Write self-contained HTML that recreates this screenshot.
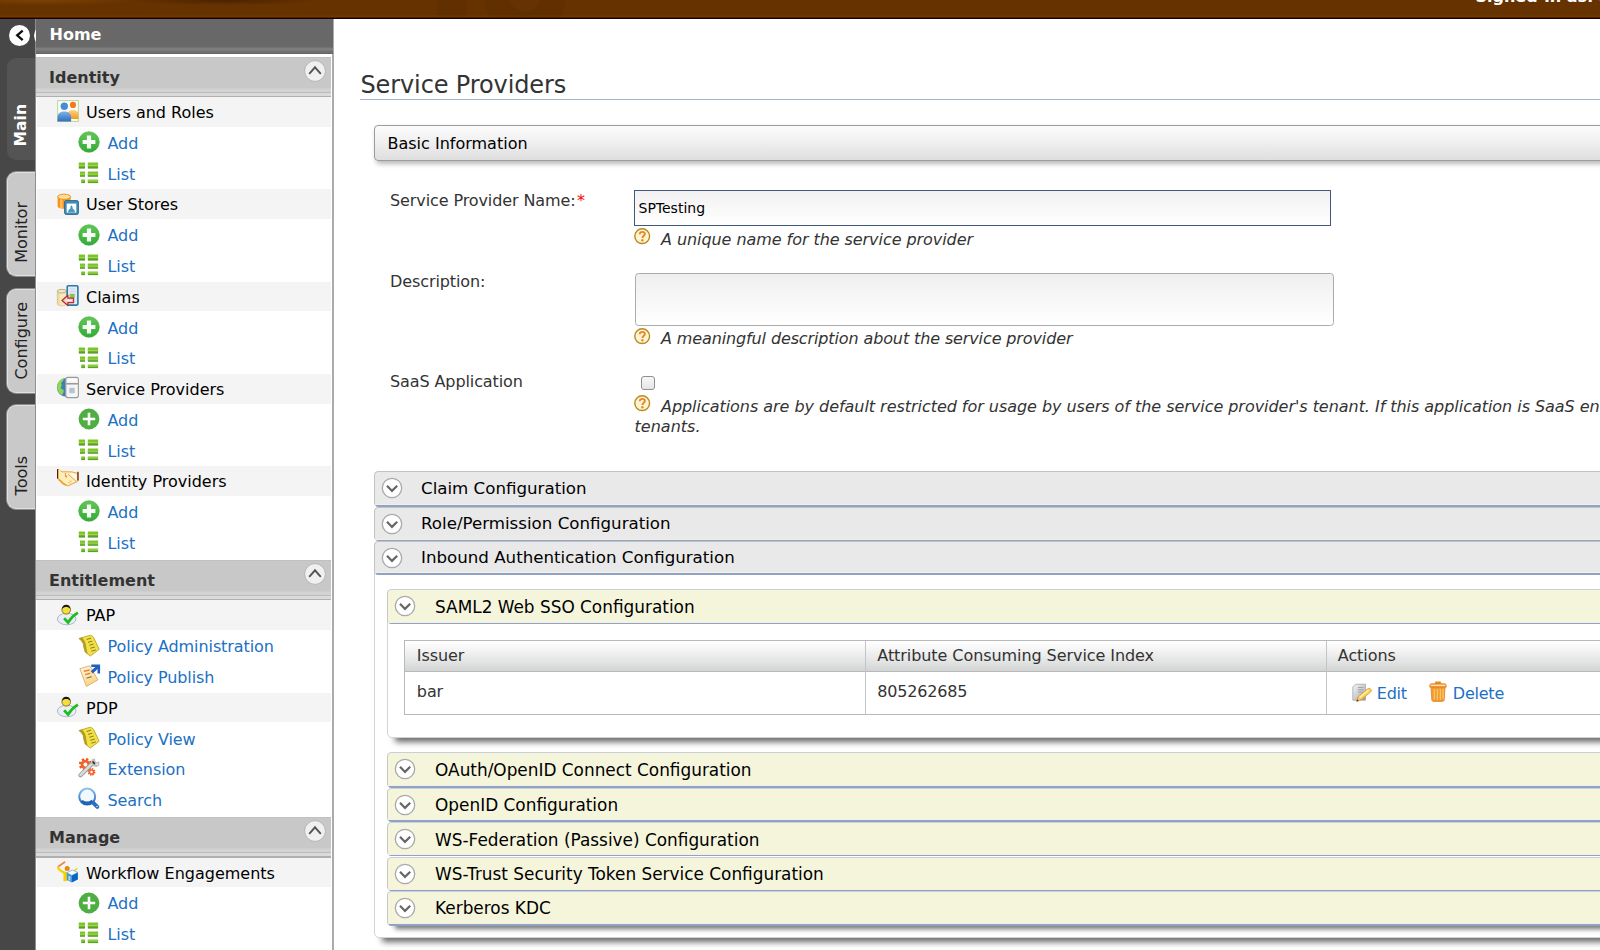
<!DOCTYPE html>
<html lang="en">
<head>
<meta charset="utf-8">
<title>Service Providers</title>
<style>
*{box-sizing:border-box;margin:0;padding:0}
html,body{width:1600px;height:950px;overflow:hidden;background:#fff}
body{font-family:"DejaVu Sans","Liberation Sans",sans-serif;font-size:16px;color:#333;position:relative}
a{color:#2070c4;text-decoration:none}
.abs{position:absolute}
svg,symbol{overflow:visible}svg{display:block}
/* top bar */
#top{left:0;top:0;width:1600px;height:19px;background:linear-gradient(#663200,#653200 14.500px,#703a00 16.800px,#4a1c00 17.600px,#160208 18.300px,#120008 19px);overflow:hidden;z-index:5}
#top .signed{position:absolute;left:1475.500px;top:-10.800px;font-weight:bold;font-size:16px;color:#fff;white-space:nowrap;line-height:16px}
#top i{position:absolute;border-radius:50%;background:rgba(60,25,0,.1)}
/* left strip */
#strip{left:0;top:18px;width:36px;height:932px;background:linear-gradient(90deg,#474747 35px,#8e8e8e 35px)}
.vtab{position:absolute;left:6.600px;width:28.400px;border-radius:9px 0 0 9px;background:#c9c9c9;border:1px solid #e0e0e0;border-right:none;box-shadow:-1px 0 0 #8a8a8a,0 -1px 0 #8a8a8a,0 1px 0 #8a8a8a}
.vtab span{position:absolute;left:3px;bottom:12.300px;width:22px;line-height:22px;white-space:nowrap;writing-mode:vertical-rl;transform:rotate(180deg);color:#222;font-size:16px}
.vtab.on{background:#545454;border-color:#545454;box-shadow:none}
.vtab.on span{color:#fff;font-weight:bold;font-size:15.600px;left:2.500px}
#back{left:9.300px;top:24.600px;width:21px;height:21px;border-radius:50%;background:#fff}
#back2{left:33.700px;top:24.600px;width:21px;height:21px;border-radius:50%;background:#fff}
/* sidebar */
#side{left:36px;top:18px;width:298px;height:932px;background:linear-gradient(90deg,#fff 296px,#ababab 296px);overflow:hidden}
#side .in{width:294.800px}
#home{width:297px;height:36.400px;background:linear-gradient(#686868,#686868 29px,#7c7c7c 30px,#808080 32px,#6e6e6e 33px,#707070 35px,#4a4a4a 36.4px);color:#fff;font-weight:bold;padding-left:13.500px;line-height:34px;position:relative;font-size:16px}
.hd{height:40.900px;margin-top:2.200px;background:linear-gradient(#bdbdbd,#c8c8c8 1.5px,#c8c8c8 31px,#d3d3d3 32px,#d3d3d3 35px,#bcbcbc 35.3px,#bcbcbc 36px,#dadada 36.3px,#dadada 39px,#b0b0b0 39.3px);color:#333;font-weight:bold;padding-left:13px;line-height:41.500px;position:relative;font-size:16px}
.hd svg{position:absolute;left:268px;top:3.300px}
.row{height:29.500px;margin-bottom:1.270px;line-height:32.300px;position:relative;white-space:nowrap;color:#000}
.row.p{background:#f4f4f4;padding-left:48.700px;margin-left:1.300px}
.row.c{padding-left:71.500px;letter-spacing:-.09px}
.row svg{position:absolute}
.row.p svg{left:19.700px;top:3.200px}
.row.c svg{left:42px;top:3.300px}
</style>
</head>
<body>
<svg width="0" height="0" style="position:absolute">
<defs>
<linearGradient id="gG" x1="0" y1="0" x2="0" y2="1"><stop offset="0" stop-color="#62c656"/><stop offset="1" stop-color="#34aa36"/></linearGradient>
<linearGradient id="gL" x1="0" y1="0" x2="0" y2="1"><stop offset="0" stop-color="#80c828"/><stop offset=".75" stop-color="#6ab424"/><stop offset="1" stop-color="#3a8014"/></linearGradient>
<linearGradient id="gB" x1="0" y1="0" x2="0" y2="1"><stop offset="0" stop-color="#7fb2e6"/><stop offset="1" stop-color="#2f6fbf"/></linearGradient>
<linearGradient id="gO" x1="0" y1="0" x2="0" y2="1"><stop offset="0" stop-color="#ffd28a"/><stop offset="1" stop-color="#f39a1e"/></linearGradient>
<linearGradient id="gC" x1="0" y1="0" x2="0" y2="1"><stop offset="0" stop-color="#ffffff"/><stop offset="1" stop-color="#e4e4e4"/></linearGradient>
<symbol id="i-add" viewBox="0 0 22 22"><circle cx="11" cy="11" r="10.3" fill="url(#gG)" stroke="#3aae3a" stroke-width=".6"/><path d="M8.9 4.6h4.2v4.3h4.3v4.2h-4.3v4.3H8.900v-4.3H4.600V8.900h4.300z" fill="#fff" opacity=".95"/></symbol>
<symbol id="i-add2" viewBox="0 0 22 22"><circle cx="11" cy="11" r="10.4" fill="#4fae42"/><path d="M9.700 4.800h2.600v4.900h4.900v2.600h-4.900v4.900H9.700v-4.900H4.800V9.700h4.900z" fill="#fff"/></symbol>
<symbol id="i-list" viewBox="0 0 22 22"><g fill="url(#gL)"><rect x=".8" y=".5" width="6.200" height="6"/><rect x="9.800" y=".5" width="10.300" height="6"/><rect x="2" y="9.500" width="5" height="5.200"/><rect x="9.800" y="9.500" width="10.300" height="5.200"/><rect x="3.200" y="17.500" width="3.800" height="3.600"/><rect x="9.800" y="17.500" width="10.300" height="3.600"/></g><g fill="#b4e06a" opacity=".7"><rect x="9.800" y="2.800" width="10.300" height="1.200"/><rect x="9.800" y="11.500" width="10.300" height="1.200"/><rect x="9.800" y="18.400" width="10.300" height="1"/><rect x=".8" y="2.800" width="6.200" height="1.200"/><rect x="2" y="11.500" width="5" height="1.200"/></g></symbol>
<symbol id="i-chev-up" viewBox="0 0 22 22"><circle cx="11" cy="11" r="10.400" fill="#f0f0f0" stroke="#aeb4ba" stroke-width=".9"/><path d="M5.200 13.800L11 7.300l5.800 6.500" fill="none" stroke="#555" stroke-width="1.900"/></symbol>
<symbol id="i-chev-dn" viewBox="0 0 22 22"><circle cx="11" cy="11" r="9.700" fill="#fff" stroke="#a9a9a9" stroke-width="1.300"/><path d="M6 8.700l5 5.200 5.200-5.200" fill="none" stroke="#666" stroke-width="2.200"/></symbol>
</defs>
</svg>
<div id="top" class="abs"><i style="left:-60px;top:-8px;width:200px;height:14px;background:radial-gradient(closest-side,rgba(150,80,10,.55),rgba(150,80,10,0))"></i><i style="left:130px;top:-4px;width:190px;height:9px;background:radial-gradient(closest-side,rgba(50,20,0,.5),rgba(50,20,0,0))"></i><i style="left:437px;top:0;width:30px;height:17px;border-radius:0;background:rgba(40,15,0,.07)"></i><i style="left:485px;top:-42px;width:80px;height:80px;background:rgba(40,15,0,.075)"></i><i style="left:509px;top:-20px;width:32px;height:32px;background:rgba(140,75,10,.13)"></i><div class="signed">Signed-in as: admin@carbon.super</div></div>
<div id="strip" class="abs">
<div class="vtab on" style="top:39.500px;height:102px"><span>Main</span></div>
<div class="vtab" style="top:153.500px;height:104.500px"><span>Monitor</span></div>
<div class="vtab" style="top:270.500px;height:104px"><span>Configure</span></div>
<div class="vtab" style="top:387px;height:103.500px"><span>Tools</span></div>
</div>
<div id="back2" class="abs"></div>
<div id="back" class="abs"><svg width="21" height="21" viewBox="0 0 21 21"><path d="M13.700 5.700L8.200 10.300l5.500 4.800" fill="none" stroke="#111" stroke-width="2.300"/></svg></div>
<svg width="0" height="0" style="position:absolute">
<defs>
<symbol id="i-users" viewBox="0 0 22 22"><rect x=".6" y=".6" width="20.800" height="20.800" fill="#fbfdf9" stroke="#b9dba0" stroke-width="1.100"/><circle cx="16" cy="4.900" r="3.100" fill="#f47a20"/><path d="M10.500 19v-4.300c0-3.200 2.300-4.700 5.500-4.700s5.500 1.500 5.500 4.700V19z" fill="url(#gO)"/><circle cx="7.300" cy="6.300" r="3.700" fill="#4a8ad4"/><path d="M.5 21.500v-4.200c0-3.900 3-5.800 6.800-5.800s6.800 1.900 6.800 5.800v4.200z" fill="url(#gB)"/></symbol>
<symbol id="i-ustore" viewBox="0 0 22 22"><path d="M.6 3.800v9.400c0 1.400 2.900 2.500 6.500 2.500s6.500-1.100 6.500-2.500V3.800z" fill="#f7941d"/><path d="M3 6v9c.8.400 1.700.6 2.600.7V6.500z" fill="#ffc46a" opacity=".8"/><ellipse cx="7.100" cy="3.800" rx="6.500" ry="2.600" fill="#ffdc9c" stroke="#e98c14" stroke-width=".9"/><rect x="7.600" y="7.600" width="13.800" height="13.800" rx="1.600" fill="#3f8db3" stroke="#2b6f93"/><rect x="9.700" y="10.600" width="9.600" height="9" fill="#fff"/><path d="M11 19.600c0-2.500 1.200-3.400 2.200-3.800.3-1.800.4-3.300 1.300-3.300s1 1.500 1.300 3.300c1 .4 2.200 1.300 2.200 3.800z" fill="#4a9abf"/></symbol>
<symbol id="i-claims" viewBox="0 0 22 22"><linearGradient id="gCy" x1="0" y1="0" x2="1" y2="0"><stop offset="0" stop-color="#e6cf8c"/><stop offset=".35" stop-color="#f8e8b4"/><stop offset="1" stop-color="#f6ecc8"/></linearGradient><path d="M.3 6.200v12.600c0 1.100 2 2 4.500 2s4.500-.9 4.500-2V6.200z" fill="url(#gCy)" stroke="#c8b88c" stroke-width=".6"/><ellipse cx="4.800" cy="6.200" rx="4.500" ry="1.900" fill="#f6e6b0" stroke="#a8a08c" stroke-width=".8"/><rect x="10.200" y=".8" width="10.700" height="19.300" rx="1" fill="#dfe9f8" stroke="#2f7aa3" stroke-width="1.600"/><path d="M12.500 4h6M12.500 6.500h6" stroke="#c4cfe6" stroke-width=".8"/><rect x="12.700" y="8.800" width="5" height="4.100" fill="#8bc34a"/><path d="M5 15.500l5.900-5.200v2.800h5.600v4.600h-5.600v2.900z" fill="#f9cdc6" stroke="#b03434" stroke-width="1.300" stroke-linejoin="round"/><path d="M9 15.300h6" stroke="#fff" stroke-width="1" opacity=".8"/></symbol>
<symbol id="i-sp" viewBox="0 0 22 22"><g transform="translate(0 1)"><circle cx="9.300" cy="9.400" r="9.400" fill="#3f7fb8"/><path d="M.3 7C1.300 3.500 3.800 1 6.800.3c-.2 2-1.200 3.600-2.800 4.700 1 1.600.8 3.400-.4 4.700.6 1.200 1.800 1.800 3 2 .3 1.800-.3 3.600-1.500 5.200C2.300 15.700-.6 11.500.3 7z" fill="#8fd84f"/><rect x="8.800" y="-.6" width="12.600" height="20.200" rx="2" fill="#f5f5f5" stroke="#9a9a9a" stroke-width="1.100"/><path d="M9.300 5.800h11.600" stroke="#8a8a8a" stroke-width="1.300"/><path d="M10.600 2.300h9" stroke="#fff" stroke-width="1.600"/><rect x="12.300" y="9.800" width="5.400" height="5.400" fill="#b4c2d4"/></g></symbol>
<symbol id="i-idp" viewBox="0 0 22 22"><path d="M1.200-.4l4.200 2.200 9.800.1 4.900 1.500v8.200L10.800 16 7 14.100 1.200 8.700z" fill="#fdeec0" stroke="#e9a33c" stroke-width="1" stroke-linejoin="round"/><path d="M1.400 0h2v8.500h-2z" fill="#fff3a0"/><path d="M12 3.200l7.800 7.800v-7z" fill="#fffaf0"/><path d="M11.300 4.300l8.300 7.600M8.400 3v3.500M13 10.500l1.500 1.500M11.500 12l1.500 1.500" stroke="#e9a33c" stroke-width="1" fill="none"/><path d="M2.300 9.800l2 1.800 1.800 2 2.500 1.200" stroke="#f0a020" stroke-width="1.800" fill="none" stroke-linecap="round"/><circle cx="9.200" cy="6.500" r="1" fill="#f58428"/><rect x="0" y="-.9" width="1.200" height="9.600" fill="#5a1a0a"/><rect x="20.100" y="1.800" width="1.700" height="8.800" fill="#8a4a1a"/></symbol>
<symbol id="i-pap" viewBox="0 0 22 22"><ellipse cx="9.700" cy="15" rx="9.300" ry="5.800" fill="#e9eef6" stroke="#a3b0ca" stroke-width=".9"/><circle cx="9.200" cy="5.800" r="4.300" fill="#f3de3c" stroke="#7c6c1a" stroke-width=".9"/><path d="M4.900 5C5 2.200 6.900.7 9.200.7s4.200 1.500 4.300 4.300c-1.300-1.400-2.700-1.900-4.300-1.900S6.200 3.600 4.900 5z" fill="#1a1a1a"/><path d="M7.100 14.300l4 4.200c2.300-3.800 5.300-7 9.800-9.800" fill="none" stroke="#1fbd1f" stroke-width="2.700"/></symbol>
<symbol id="i-policy" viewBox="0 0 22 22"><path d="M.9 3.500L12.300.2Q15 1 15.600 2.500L21.200 14.300 12.300 21.100 7.100 16.900Q5.500 12 5.200 8.400 3.500 5 .9 3.500z" fill="#f2e146" stroke="#b09a22" stroke-width=".8" stroke-linejoin="round"/><path d="M.9 3.500Q3.500 5 5.200 8.400 5.500 12 7.100 16.900l2.600 2.100Q8.300 14 7.900 9.500 6.800 5.500 4.200 2.600z" fill="#b39b24"/><path d="M8.700 4.500l4.300-1.400M10 7.400l4.300-1.300M11.400 10.300l4.200-1.300M12.300 13.300l4.600-1.300M13.300 16.200l4.600-1.300" stroke="#8c7c14" stroke-width="1"/></symbol>
<symbol id="i-publish" viewBox="0 0 22 22"><linearGradient id="gP" x1="0" y1="0" x2=".4" y2="1"><stop offset="0" stop-color="#fffaf0"/><stop offset="1" stop-color="#fbd584"/></linearGradient><path d="M1.900 3.700L11.700.8 19.900 14.800 8.400 21.400z" fill="url(#gP)" stroke="#d6ae5c" stroke-width=".9" stroke-linejoin="round"/><path d="M5.800 6.300l5.900-1.300M7.100 9.600l5.200-1.300" stroke="#f08030" stroke-width="1.400"/><path d="M8.400 13.200l5.200-1.600" stroke="#8c7c3c" stroke-width="1.100"/><path d="M13.800 7.400l6.600-6.200" stroke="#1f5fc0" stroke-width="3"/><path d="M13.300-.5h8.800v9.100h-2.600V2H13.300z" fill="#1f5fc0"/></symbol>
<symbol id="i-ext" viewBox="0 0 22 22"><circle cx="7.400" cy="6.500" r="5.400" fill="none" stroke="#ee5a1e" stroke-width="2.300" stroke-dasharray="2.300 1.940"/><circle cx="7.400" cy="6.500" r="3.400" fill="none" stroke="#f0642a" stroke-width="2.800"/><circle cx="13.500" cy="13.900" r="3.100" fill="none" stroke="#ee5a1e" stroke-width="1.600" stroke-dasharray="1.500 .93"/><circle cx="13.500" cy="13.900" r="2" fill="none" stroke="#f0642a" stroke-width="1.500"/><path d="M2.500 17.300L14.600 5.200" stroke="#9c9c9c" stroke-width="4.200" stroke-linecap="round"/><path d="M2.500 17.100L14.500 5.100" stroke="#dcdcdc" stroke-width="2.400" stroke-linecap="round"/><path d="M13.800 1.200l3.200-.8.300 2.800 2 1.200 1.800-1.400.4 4.200-3 1.700-3.500-.6-1.900-3z" fill="#bdbdbd"/><path d="M14.600 3.500l2.200 2.600" stroke="#2c2c2c" stroke-width="1.600"/><path d="M17.600 6l2.600.3" stroke="#eee" stroke-width="1.200"/></symbol>
<symbol id="i-search" viewBox="0 0 22 22"><linearGradient id="gS" x1="0" y1="0" x2="0" y2="1"><stop offset="0" stop-color="#8cc0ee"/><stop offset=".55" stop-color="#4a90d8"/><stop offset="1" stop-color="#1f62b4"/></linearGradient><circle cx="9.200" cy="8.600" r="8" fill="#f2f8fe" stroke="url(#gS)" stroke-width="2"/><path d="M3.800 12.800c2.800 2.600 7.600 2.800 10.600-.2" fill="none" stroke="#1f62b4" stroke-width="2.400"/><path d="M15.300 14.800l4 4" stroke="#2a6ec0" stroke-width="4" stroke-linecap="round"/><circle cx="19" cy="18.500" r=".8" fill="#cfe4fa"/></symbol>
<symbol id="i-wf" viewBox="0 0 22 22"><g transform="translate(0 1)"><path d="M1.600 4.300L7.600.2" stroke="#f08a3c" stroke-width="1.700" stroke-linecap="round"/><path d="M.9 5.700c1.500 2.600 4 4.300 7.200 5.200" fill="none" stroke="#f8d200" stroke-width="2.200" stroke-linecap="round"/><rect x="6.400" y="10" width="3.600" height="9.200" fill="#f8d000"/><path d="M17.800 8.500l2-2" stroke="#f8d200" stroke-width="1.500" stroke-linecap="round"/><circle cx="10.200" cy="6.400" r="2.500" fill="#e8870c"/><path d="M9.800 10.800l5.400-2.700 5.700 2.300-6 3z" fill="#fff" stroke="#5aa4e4" stroke-width=".7" stroke-linejoin="round"/><path d="M9.800 10.800l5.100 2.600v7.200l-5.100-2.700z" fill="#3f92e0"/><path d="M11.400 13.500l2 1v4.600l-2-1z" fill="#a8e0f0"/><path d="M14.900 13.400l6-3v7.100l-6 3.100z" fill="#0a68bc"/></g></symbol>
</defs>
</svg>
<div id="side" class="abs"><div class="in">
<div id="home">Home</div>
<div class="hd" style="margin-top:2.600px;height:40.200px">Identity<svg width="22" height="22"><use href="#i-chev-up"/></svg></div>
<div class="row p"><svg width="22" height="22"><use href="#i-users"/></svg>Users and Roles</div>
<div class="row c"><svg width="22" height="22"><use href="#i-add"/></svg><a>Add</a></div>
<div class="row c"><svg width="22" height="22"><use href="#i-list"/></svg><a>List</a></div>
<div class="row p"><svg width="22" height="22"><use href="#i-ustore"/></svg>User Stores</div>
<div class="row c"><svg width="22" height="22"><use href="#i-add"/></svg><a>Add</a></div>
<div class="row c"><svg width="22" height="22"><use href="#i-list"/></svg><a>List</a></div>
<div class="row p"><svg width="22" height="22"><use href="#i-claims"/></svg>Claims</div>
<div class="row c"><svg width="22" height="22"><use href="#i-add"/></svg><a>Add</a></div>
<div class="row c"><svg width="22" height="22"><use href="#i-list"/></svg><a>List</a></div>
<div class="row p"><svg width="22" height="22"><use href="#i-sp"/></svg>Service Providers</div>
<div class="row c"><svg width="22" height="22"><use href="#i-add2"/></svg><a>Add</a></div>
<div class="row c"><svg width="22" height="22"><use href="#i-list"/></svg><a>List</a></div>
<div class="row p"><svg width="22" height="22"><use href="#i-idp"/></svg>Identity Providers</div>
<div class="row c"><svg width="22" height="22"><use href="#i-add"/></svg><a>Add</a></div>
<div class="row c"><svg width="22" height="22"><use href="#i-list"/></svg><a>List</a></div>
<div class="hd">Entitlement<svg width="22" height="22"><use href="#i-chev-up"/></svg></div>
<div class="row p"><svg width="22" height="22"><use href="#i-pap"/></svg>PAP</div>
<div class="row c"><svg width="22" height="22"><use href="#i-policy"/></svg><a>Policy Administration</a></div>
<div class="row c"><svg width="22" height="22"><use href="#i-publish"/></svg><a>Policy Publish</a></div>
<div class="row p"><svg width="22" height="22"><use href="#i-pap"/></svg>PDP</div>
<div class="row c"><svg width="22" height="22"><use href="#i-policy"/></svg><a>Policy View</a></div>
<div class="row c"><svg width="22" height="22"><use href="#i-ext"/></svg><a>Extension</a></div>
<div class="row c"><svg width="22" height="22"><use href="#i-search"/></svg><a>Search</a></div>
<div class="hd">Manage<svg width="22" height="22"><use href="#i-chev-up"/></svg></div>
<div class="row p"><svg width="22" height="22"><use href="#i-wf"/></svg>Workflow Engagements</div>
<div class="row c"><svg width="22" height="22"><use href="#i-add2"/></svg><a>Add</a></div>
<div class="row c"><svg width="22" height="22"><use href="#i-list"/></svg><a>List</a></div>
</div></div>
<style>
#title{left:360.500px;top:69.800px;font-size:24px;line-height:30px;color:#333;white-space:nowrap;letter-spacing:-.12px}
#tline{left:360px;top:98.700px;width:1300px;height:1.300px;background:#a3b4d3}
#basic{left:374px;top:125px;width:1300px;height:35.600px;border:1.300px solid #9c9c9c;border-radius:4px;background:linear-gradient(#fcfcfc,#f0f0f0 45%,#dedede);box-shadow:2px 3px 5px rgba(0,0,0,.28);color:#000;padding-left:12.500px;line-height:35.500px;white-space:nowrap}
.lbl{left:390px;white-space:nowrap;line-height:20px;color:#333;letter-spacing:-.1px}
.lbl b{color:#f00;font-weight:normal;margin-left:1.400px}
#inp{left:634px;top:190px;width:696.500px;height:35.500px;border:1.300px solid #40597a;background:linear-gradient(#f1f1f1,#fff);font-size:14px;color:#000;line-height:35.500px;padding-left:3.500px;white-space:nowrap}
#ta{left:635px;top:272.700px;width:698.500px;height:53.300px;border:1.300px solid #ababab;border-radius:3.500px;background:linear-gradient(#efefef,#fff)}
#cb{left:641px;top:376.200px;width:13.600px;height:13.600px;border:1.200px solid #8f8f8f;border-radius:3px;background:linear-gradient(#f8f8f8,#e6e6e6)}
.help{left:634.600px;white-space:nowrap;font-style:italic;line-height:20px;color:#333;padding-left:26.400px}
.help svg{position:absolute;left:0;top:-5px}
.ah{left:374px;width:1300px;border:1px solid #c2c2c2;border-bottom:none;border-radius:4.500px;background:#e9e9e9;color:#000;white-space:nowrap;padding-left:46px;font-size:16.670px;overflow:hidden}
.ah:after{content:"";position:absolute;left:0;right:0;bottom:0;height:2.500px;background:linear-gradient(#f6efe6 1px,#8fa3c6 1px)}
.ah svg{position:absolute;left:5.500px;top:5px}
.ah.y{left:387.400px;background:#f5f5dc;padding-left:46.700px;font-size:16.900px;border-color:#c9d0dc #c8c8c0 #c8c8c0}
.ah.y svg{left:5.900px}
#inb{left:374px;top:560px;width:1300px;height:378px;border:1px solid #d4d4d4;border-radius:0 0 5px 5px;background:#fff;box-shadow:5px 7px 6px -3px rgba(0,0,0,.6)}
#samlc{left:387.400px;top:610px;width:1300px;height:128px;border:1px solid #d4d4d4;border-radius:0 0 5px 5px;background:#fff;box-shadow:5px 7px 6px -3px rgba(0,0,0,.6)}
#tbl{left:404.300px;top:640px;width:1300px;height:74.500px;border:1.300px solid #b9b9b9;background:#fff}
#tbl .th{position:absolute;left:0;top:0;width:100%;height:30.800px;background:linear-gradient(#fff,#f4f4f4 30%,#e2e3e3 70%,#d2d4d4);border-bottom:1.300px solid #b9b9b9}
#tbl .v{position:absolute;top:0;width:1.300px;height:100%;background:#c4c4c4}
#tbl span,#tbl a{position:absolute;white-space:nowrap;line-height:20px}
#tbl a{letter-spacing:-.22px}
#tbl span{letter-spacing:-.07px}
#tbl svg{position:absolute}
</style>
<svg width="0" height="0" style="position:absolute">
<defs>
<symbol id="i-help" viewBox="0 0 16 16"><circle cx="8" cy="8" r="7.200" fill="#fdf4d2" stroke="#b98a1f" stroke-width="1.400"/><path d="M5.600 6.100c0-1.500 1.100-2.300 2.500-2.300 1.500 0 2.500.8 2.500 2 0 1.800-2.300 1.800-2.300 3.900" fill="none" stroke="#e8872a" stroke-width="1.900"/><circle cx="8.200" cy="12" r="1.150" fill="#e8872a"/></symbol>
<symbol id="i-edit" viewBox="0 0 20 20"><linearGradient id="gD" x1="0" y1="0" x2="1" y2="1"><stop offset="0" stop-color="#f4f5f6"/><stop offset=".6" stop-color="#c4c8cc"/><stop offset="1" stop-color="#8e9298"/></linearGradient><path d="M.8 4L3.500 1.200h10v16H.8z" fill="url(#gD)" stroke="#a4a8ae" stroke-width=".8"/><path d="M6 4.500h5.500M6 6.800h5.500M6 9.100h4.500" stroke="#9a9ea6" stroke-width=".9"/><path d="M4.800 18.300l1.300-4.300L15.800 5.800c.8-.7 2-.5 2.800.3.800.9.900 2 .2 2.700L9 16.800z" fill="#f7d84e" stroke="#e79a3c" stroke-width="1" stroke-linejoin="round"/><path d="M7.500 14.500l8.800-7.400" stroke="#fff8c8" stroke-width="1.200"/><path d="M4.800 18.300l1.300-4.300 2.900 2.800z" fill="#f3c9a0" stroke="#e79a3c" stroke-width=".6"/><path d="M4.500 18.600l.8-2.300 1.500 1.500z" fill="#5a2a0a"/></symbol>
<symbol id="i-del" viewBox="0 0 18 21"><rect x="6" y=".5" width="6" height="2.600" rx=".8" fill="#e8871e"/><path d="M.8 4.400c0-1 .7-1.700 1.700-1.700h13c1 0 1.700.7 1.700 1.700v1.800H.8z" fill="#f6a03a" stroke="#e08422" stroke-width=".8"/><path d="M1.800 4.300h14.400" stroke="#fff1dc" stroke-width="1"/><path d="M2 6.500h14l-.8 12.300c-.1 1-.8 1.600-1.800 1.600H4.600c-1 0-1.700-.6-1.800-1.600z" fill="#f39a30" stroke="#e08422" stroke-width=".8"/><path d="M5.300 8v10.500M8.300 8v10.800M11.300 8v10.800M14 8v10" stroke="#fbd27a" stroke-width="1"/></symbol>
</defs>
</svg>
<div id="title" class="abs">Service Providers</div>
<div id="tline" class="abs"></div>
<div id="basic" class="abs">Basic Information</div>

<div class="abs lbl" style="top:190.500px">Service Provider Name:<b>*</b></div>
<div id="inp" class="abs">SPTesting</div>
<div class="abs help" style="top:230.200px;letter-spacing:-.06px"><svg width="16.400" height="16.400" style="top:-2.400px;left:-.5px"><use href="#i-help"/></svg>A unique name for the service provider</div>

<div class="abs lbl" style="top:271.500px">Description:</div>
<div id="ta" class="abs"></div>
<div class="abs help" style="top:329px;letter-spacing:-.12px"><svg width="16.400" height="16.400" style="top:-1px;left:-.5px"><use href="#i-help"/></svg>A meaningful description about the service provider</div>

<div class="abs lbl" style="top:371.500px">SaaS Application</div>
<div id="cb" class="abs"></div>
<div class="abs help" style="top:397px;letter-spacing:-.04px"><svg width="16.400" height="16.400" style="top:-1.700px;left:-.5px"><use href="#i-help"/></svg>Applications are by default restricted for usage by users of the service provider's tenant. If this application is SaaS enabled it is opened up for all the users of all the</div>
<div class="abs help" style="top:417px;padding-left:0">tenants.</div>

<div id="inb" class="abs"></div>

<div class="abs ah" style="top:471.000px;height:35.600px;line-height:33.860px"><svg width="22" height="22"><use href="#i-chev-dn"/></svg>Claim Configuration</div>
<div class="abs ah" style="top:507.000px;height:34.000px;line-height:31.060px"><svg width="22" height="22"><use href="#i-chev-dn"/></svg>Role/Permission Configuration</div>
<div class="abs ah" style="top:541.000px;height:33.900px;line-height:32.460px"><svg width="22" height="22"><use href="#i-chev-dn"/></svg>Inbound Authentication Configuration</div>
<div id="samlc" class="abs"></div>
<div class="abs ah y" style="top:589.000px;height:35.300px;line-height:34.510px"><svg width="22" height="22"><use href="#i-chev-dn"/></svg>SAML2 Web SSO Configuration</div>
<div id="tbl" class="abs">
<div class="th"></div>
<div class="v" style="left:459.500px"></div><div class="v" style="left:920.700px"></div>
<span style="left:11.500px;top:5px">Issuer</span>
<span style="left:472px;top:5px">Attribute Consuming Service Index</span>
<span style="left:932.500px;top:5px">Actions</span>
<span style="left:11.500px;top:41px">bar</span>
<span style="left:472px;top:41px;letter-spacing:-.2px">805262685</span>
<svg width="20" height="20" style="left:946.800px;top:41.500px"><use href="#i-edit"/></svg>
<a style="left:971.500px;top:42.800px">Edit</a>
<svg width="18" height="21" style="left:1023.800px;top:40.300px"><use href="#i-del"/></svg>
<a style="left:1047.500px;top:42.800px">Delete</a>
</div>

<div class="abs ah y" style="top:752.000px;height:35.600px;line-height:35.510px"><svg width="22" height="22"><use href="#i-chev-dn"/></svg>OAuth/OpenID Connect Configuration</div>
<div class="abs ah y" style="top:787.500px;height:34.300px;line-height:32.710px"><svg width="22" height="22"><use href="#i-chev-dn"/></svg>OpenID Configuration</div>
<div class="abs ah y" style="top:821.900px;height:34.600px;line-height:34.310px"><svg width="22" height="22"><use href="#i-chev-dn"/></svg>WS-Federation (Passive) Configuration</div>
<div class="abs ah y" style="top:856.600px;height:34.500px;line-height:33.110px"><svg width="22" height="22"><use href="#i-chev-dn"/></svg>WS-Trust Security Token Service Configuration</div>
<div class="abs ah y" style="top:891.300px;height:34.300px;line-height:32.110px;box-shadow:5px 6px 5px -3px rgba(0,0,0,.55)"><svg width="22" height="22"><use href="#i-chev-dn"/></svg>Kerberos KDC</div>
</body>
</html>
